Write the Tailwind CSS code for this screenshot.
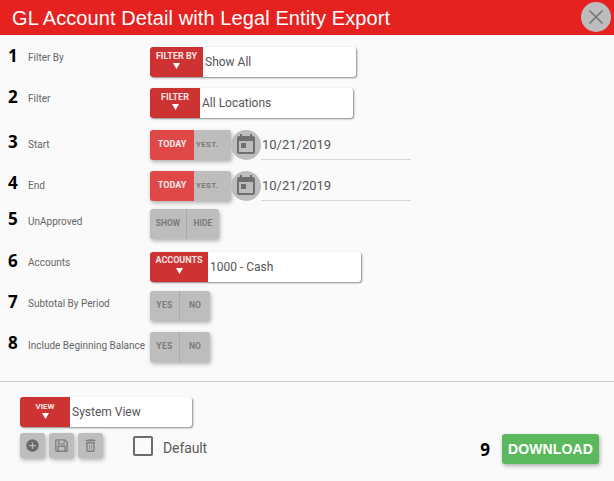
<!DOCTYPE html>
<html><head><meta charset="utf-8"><script src="https://cdn.jsdelivr.net/npm/@tailwindcss/browser@4"></script></head>
<body class="m-0 h-[481px] w-[614px] overflow-hidden bg-[#fafafa] font-['Roboto',sans-serif] text-[#555]">
<header class="relative flex h-[35px] items-center bg-[#e62220] pl-[12px] font-['Liberation_Sans',sans-serif] text-[20px] tracking-[0.1px] text-white">
GL Account Detail with Legal Entity Export
<button class="absolute right-[3px] top-[2px] flex h-[30px] w-[30px] items-center justify-center rounded-full bg-[#bdbdbd]"><svg width="16" height="16" viewBox="0 0 16 16" stroke="#757575" stroke-width="1.6" fill="none"><path d="M1.500 1.500L14.500 14.500M14.500 1.500L1.500 14.500"/></svg></button>
</header>
<main class="flex h-[347px] flex-col border-b border-[#c8c8c8]">
 <!-- 1 -->
 <div class="mt-[12px] flex h-[30px]">
  <span class="w-[28px] pl-[8px] -mt-[1px] font-['Open_Sans',sans-serif] text-[17px] font-bold leading-[20px] text-black">1</span>
  <span class="w-[122px] pt-[5px] text-[10px] leading-[12px] text-[#666]">Filter By</span>
  <div class="flex w-[206px] rounded-[3px] bg-white shadow-[1px_1px_2px_rgba(0,0,0,0.45)]">
   <div class="flex w-[53px] flex-col items-center rounded-l-[3px] bg-[#cd3333] pt-[4px] text-[9px] font-bold leading-[10px] text-[#f6e4e4]">FILTER BY<svg class="mt-[2px]" width="7" height="6" viewBox="0 0 7 6" fill="#fff"><path d="M0 0H7L3.500 6Z"/></svg></div>
   <span class="pl-[2px] text-[12px] leading-[30px]">Show All</span>
  </div>
 </div>
 <!-- 2 -->
 <div class="mt-[11px] flex h-[30px]">
  <span class="w-[28px] pl-[8px] -mt-[1px] font-['Open_Sans',sans-serif] text-[17px] font-bold leading-[20px] text-black">2</span>
  <span class="w-[122px] pt-[5px] text-[10px] leading-[12px] text-[#666]">Filter</span>
  <div class="flex w-[203px] rounded-[3px] bg-white shadow-[1px_1px_2px_rgba(0,0,0,0.45)]">
   <div class="flex w-[50px] flex-col items-center rounded-l-[3px] bg-[#cd3333] pt-[4px] text-[9px] font-bold leading-[10px] text-[#f6e4e4]">FILTER<svg class="mt-[2px]" width="7" height="6" viewBox="0 0 7 6" fill="#fff"><path d="M0 0H7L3.500 6Z"/></svg></div>
   <span class="pl-[2px] text-[12px] leading-[30px]">All Locations</span>
  </div>
 </div>
 <!-- 3 -->
 <div class="mt-[12px] flex h-[30px]">
  <span class="w-[28px] pl-[8px] mt-[2px] font-['Open_Sans',sans-serif] text-[17px] font-bold leading-[20px] text-black">3</span>
  <span class="w-[122px] pt-[9px] text-[10px] leading-[12px] text-[#666]">Start</span>
  <div class="flex w-[81px] overflow-hidden rounded-[3px] bg-[#bdbdbd] shadow-[1px_2px_4px_rgba(0,0,0,0.3)]">
   <span class="w-[44px] bg-[#e04848] text-center text-[9px] font-bold leading-[29px] text-[#f8e8e8]">TODAY</span>
   <span class="pl-[2px] text-[8px] font-bold leading-[29px] tracking-[0.3px] text-[#7a7a7a]">YEST.</span>
  </div>
  <div class="flex h-[30px] w-[30px] items-center justify-center rounded-full bg-[#bdbdbd]"><svg width="24" height="24" viewBox="0 0 24 24" fill="#6f6f6f"><path d="M19 3h-1V1h-2v2H8V1H6v2H5C3.900 3 3 3.900 3 5v14c0 1.100.9 2 2 2h14c1.100 0 2-.9 2-2V5c0-1.100-.9-2-2-2zm0 16H5V8h14v11zM7 10h5v5H7z"/></svg></div>
  <div class="h-[30px] w-[150px] border-b border-[#d5d5d5] pl-[1px] text-[13px] leading-[29px]">10/21/2019</div>
 </div>
 <!-- 4 -->
 <div class="mt-[11px] flex h-[30px]">
  <span class="w-[28px] pl-[8px] mt-[2px] font-['Open_Sans',sans-serif] text-[17px] font-bold leading-[20px] text-black">4</span>
  <span class="w-[122px] pt-[9px] text-[10px] leading-[12px] text-[#666]">End</span>
  <div class="flex w-[81px] overflow-hidden rounded-[3px] bg-[#bdbdbd] shadow-[1px_2px_4px_rgba(0,0,0,0.3)]">
   <span class="w-[44px] bg-[#e04848] text-center text-[9px] font-bold leading-[29px] text-[#f8e8e8]">TODAY</span>
   <span class="pl-[2px] text-[8px] font-bold leading-[29px] tracking-[0.3px] text-[#7a7a7a]">YEST.</span>
  </div>
  <div class="flex h-[30px] w-[30px] items-center justify-center rounded-full bg-[#bdbdbd]"><svg width="24" height="24" viewBox="0 0 24 24" fill="#6f6f6f"><path d="M19 3h-1V1h-2v2H8V1H6v2H5C3.900 3 3 3.900 3 5v14c0 1.100.9 2 2 2h14c1.100 0 2-.9 2-2V5c0-1.100-.9-2-2-2zm0 16H5V8h14v11zM7 10h5v5H7z"/></svg></div>
  <div class="h-[30px] w-[150px] border-b border-[#d5d5d5] pl-[1px] text-[13px] leading-[29px]">10/21/2019</div>
 </div>
 <!-- 5 -->
 <div class="mt-[8px] flex h-[30px]">
  <span class="w-[28px] pl-[8px] font-['Open_Sans',sans-serif] text-[17px] font-bold leading-[20px] text-black">5</span>
  <span class="w-[122px] pt-[7px] text-[10px] leading-[12px] text-[#666]">UnApproved</span>
  <div class="flex w-[69px] overflow-hidden rounded-[3px] bg-[#bdbdbd] text-[8.500px] font-bold leading-[29px] text-[#7a7a7a] shadow-[1px_2px_4px_rgba(0,0,0,0.3)]">
   <span class="w-[37px] border-r border-[#aaa] text-center">SHOW</span><span class="flex-1 text-center">HIDE</span>
  </div>
 </div>
 <!-- 6 -->
 <div class="mt-[13px] flex h-[30px]">
  <span class="w-[28px] pl-[8px] -mt-[1px] font-['Open_Sans',sans-serif] text-[17px] font-bold leading-[20px] text-black">6</span>
  <span class="w-[122px] pt-[5px] text-[10px] leading-[12px] text-[#666]">Accounts</span>
  <div class="flex w-[211px] rounded-[3px] bg-white shadow-[1px_1px_2px_rgba(0,0,0,0.45)]">
   <div class="flex w-[58px] flex-col items-center rounded-l-[3px] bg-[#cd3333] pt-[3px] text-[9px] font-bold leading-[10px] text-[#f6e4e4]">ACCOUNTS<svg class="mt-[3px]" width="7" height="6" viewBox="0 0 7 6" fill="#fff"><path d="M0 0H7L3.500 6Z"/></svg></div>
   <span class="pl-[2px] text-[12px] leading-[30px]">1000 - Cash</span>
  </div>
 </div>
 <!-- 7 -->
 <div class="mt-[9px] flex h-[30px]">
  <span class="w-[28px] pl-[8px] mt-[1px] font-['Open_Sans',sans-serif] text-[17px] font-bold leading-[20px] text-black">7</span>
  <span class="w-[122px] pt-[7px] text-[10px] leading-[12px] text-[#666]">Subtotal By Period</span>
  <div class="flex w-[60px] overflow-hidden rounded-[3px] bg-[#bdbdbd] text-[8.500px] font-bold leading-[29px] text-[#7a7a7a] shadow-[1px_2px_4px_rgba(0,0,0,0.3)]">
   <span class="w-[30px] border-r border-[#aaa] text-center tracking-[0.4px]">YES</span><span class="flex-1 text-center">NO</span>
  </div>
 </div>
 <!-- 8 -->
 <div class="mt-[11px] flex h-[30px]">
  <span class="w-[28px] pl-[8px] mt-[1px] font-['Open_Sans',sans-serif] text-[17px] font-bold leading-[20px] text-black">8</span>
  <span class="w-[122px] whitespace-nowrap pt-[8px] text-[10px] leading-[12px] text-[#666]">Include Beginning Balance</span>
  <div class="flex w-[60px] overflow-hidden rounded-[3px] bg-[#bdbdbd] text-[8.500px] font-bold leading-[29px] text-[#7a7a7a] shadow-[1px_2px_4px_rgba(0,0,0,0.3)]">
   <span class="w-[30px] border-r border-[#aaa] text-center tracking-[0.4px]">YES</span><span class="flex-1 text-center">NO</span>
  </div>
 </div>
</main>
<footer class="flex justify-between pl-[20px] pr-[15px]">
 <div class="pt-[15px]">
  <div class="flex h-[30px] w-[172px] rounded-[3px] bg-white shadow-[1px_1px_2px_rgba(0,0,0,0.45)]">
   <div class="flex w-[50px] flex-col items-center rounded-l-[3px] bg-[#cd3333] pt-[5px] text-[8px] font-bold leading-[9px] text-[#f6e4e4]">VIEW<svg class="mt-[2px]" width="7" height="6" viewBox="0 0 7 6" fill="#fff"><path d="M0 0H7L3.500 6Z"/></svg></div>
   <span class="pl-[2px] text-[12px] leading-[30px]">System View</span>
  </div>
  <div class="mt-[6px] flex items-start">
   <div class="flex gap-[4px]">
    <span class="flex h-[25px] w-[25px] items-center justify-center rounded-[3px] bg-[#bdbdbd] shadow-[1px_2px_4px_rgba(0,0,0,0.3)]"><svg width="15" height="15" viewBox="0 0 24 24" fill="#6a6a6a"><path d="M12 2a10 10 0 1 0 0 20a10 10 0 0 0 0-20zm5 11h-4v4h-2v-4H7v-2h4V7h2v4h4z"/></svg></span>
    <span class="flex h-[25px] w-[25px] items-center justify-center rounded-[3px] bg-[#bdbdbd] shadow-[1px_2px_4px_rgba(0,0,0,0.3)]"><svg width="17" height="17" viewBox="0 0 24 24" fill="#808080"><path d="M17 3H5a2 2 0 0 0-2 2v14a2 2 0 0 0 2 2h14a2 2 0 0 0 2-2V7l-4-4zm2 16H5V5h11.170L19 7.830V19zM6 12h12v7h-2v-5H8v5H6zM7 5h2v4h6V5h1.500v5.500h-9.500z"/></svg></span>
    <span class="flex h-[25px] w-[25px] items-center justify-center rounded-[3px] bg-[#bdbdbd] shadow-[1px_2px_4px_rgba(0,0,0,0.3)]"><svg width="17" height="17" viewBox="0 0 24 24" fill="#808080"><path d="M6 19a2 2 0 0 0 2 2h8a2 2 0 0 0 2-2V7H6v12zm2-10h8v10H8V9zm7.500-5l-1-1h-5l-1 1H5v2h14V4zM10 10.500h1v7h-1zM13 10.500h1v7h-1z"/></svg></span>
   </div>
   <span class="ml-[30px] mt-[3px] h-[20px] w-[20px] rounded-[2px] border-2 border-[#6b6b6b]"></span>
   <span class="ml-[10px] mt-[5px] text-[14px] leading-[20px] tracking-[-0.1px] text-[#5a5a5a]">Default</span>
  </div>
 </div>
 <div class="flex items-start pt-[52px]">
  <span class="mr-[12px] mt-[5px] font-['Open_Sans',sans-serif] text-[17px] font-bold leading-[22px] text-black">9</span>
  <button class="h-[30px] w-[97px] rounded-[3px] bg-[#5cb85c] font-['Liberation_Sans',sans-serif] text-[14px] font-bold tracking-[0.1px] text-white shadow-[1px_2px_4px_rgba(0,0,0,0.3)]">DOWNLOAD</button>
 </div>
</footer>
</body></html>
